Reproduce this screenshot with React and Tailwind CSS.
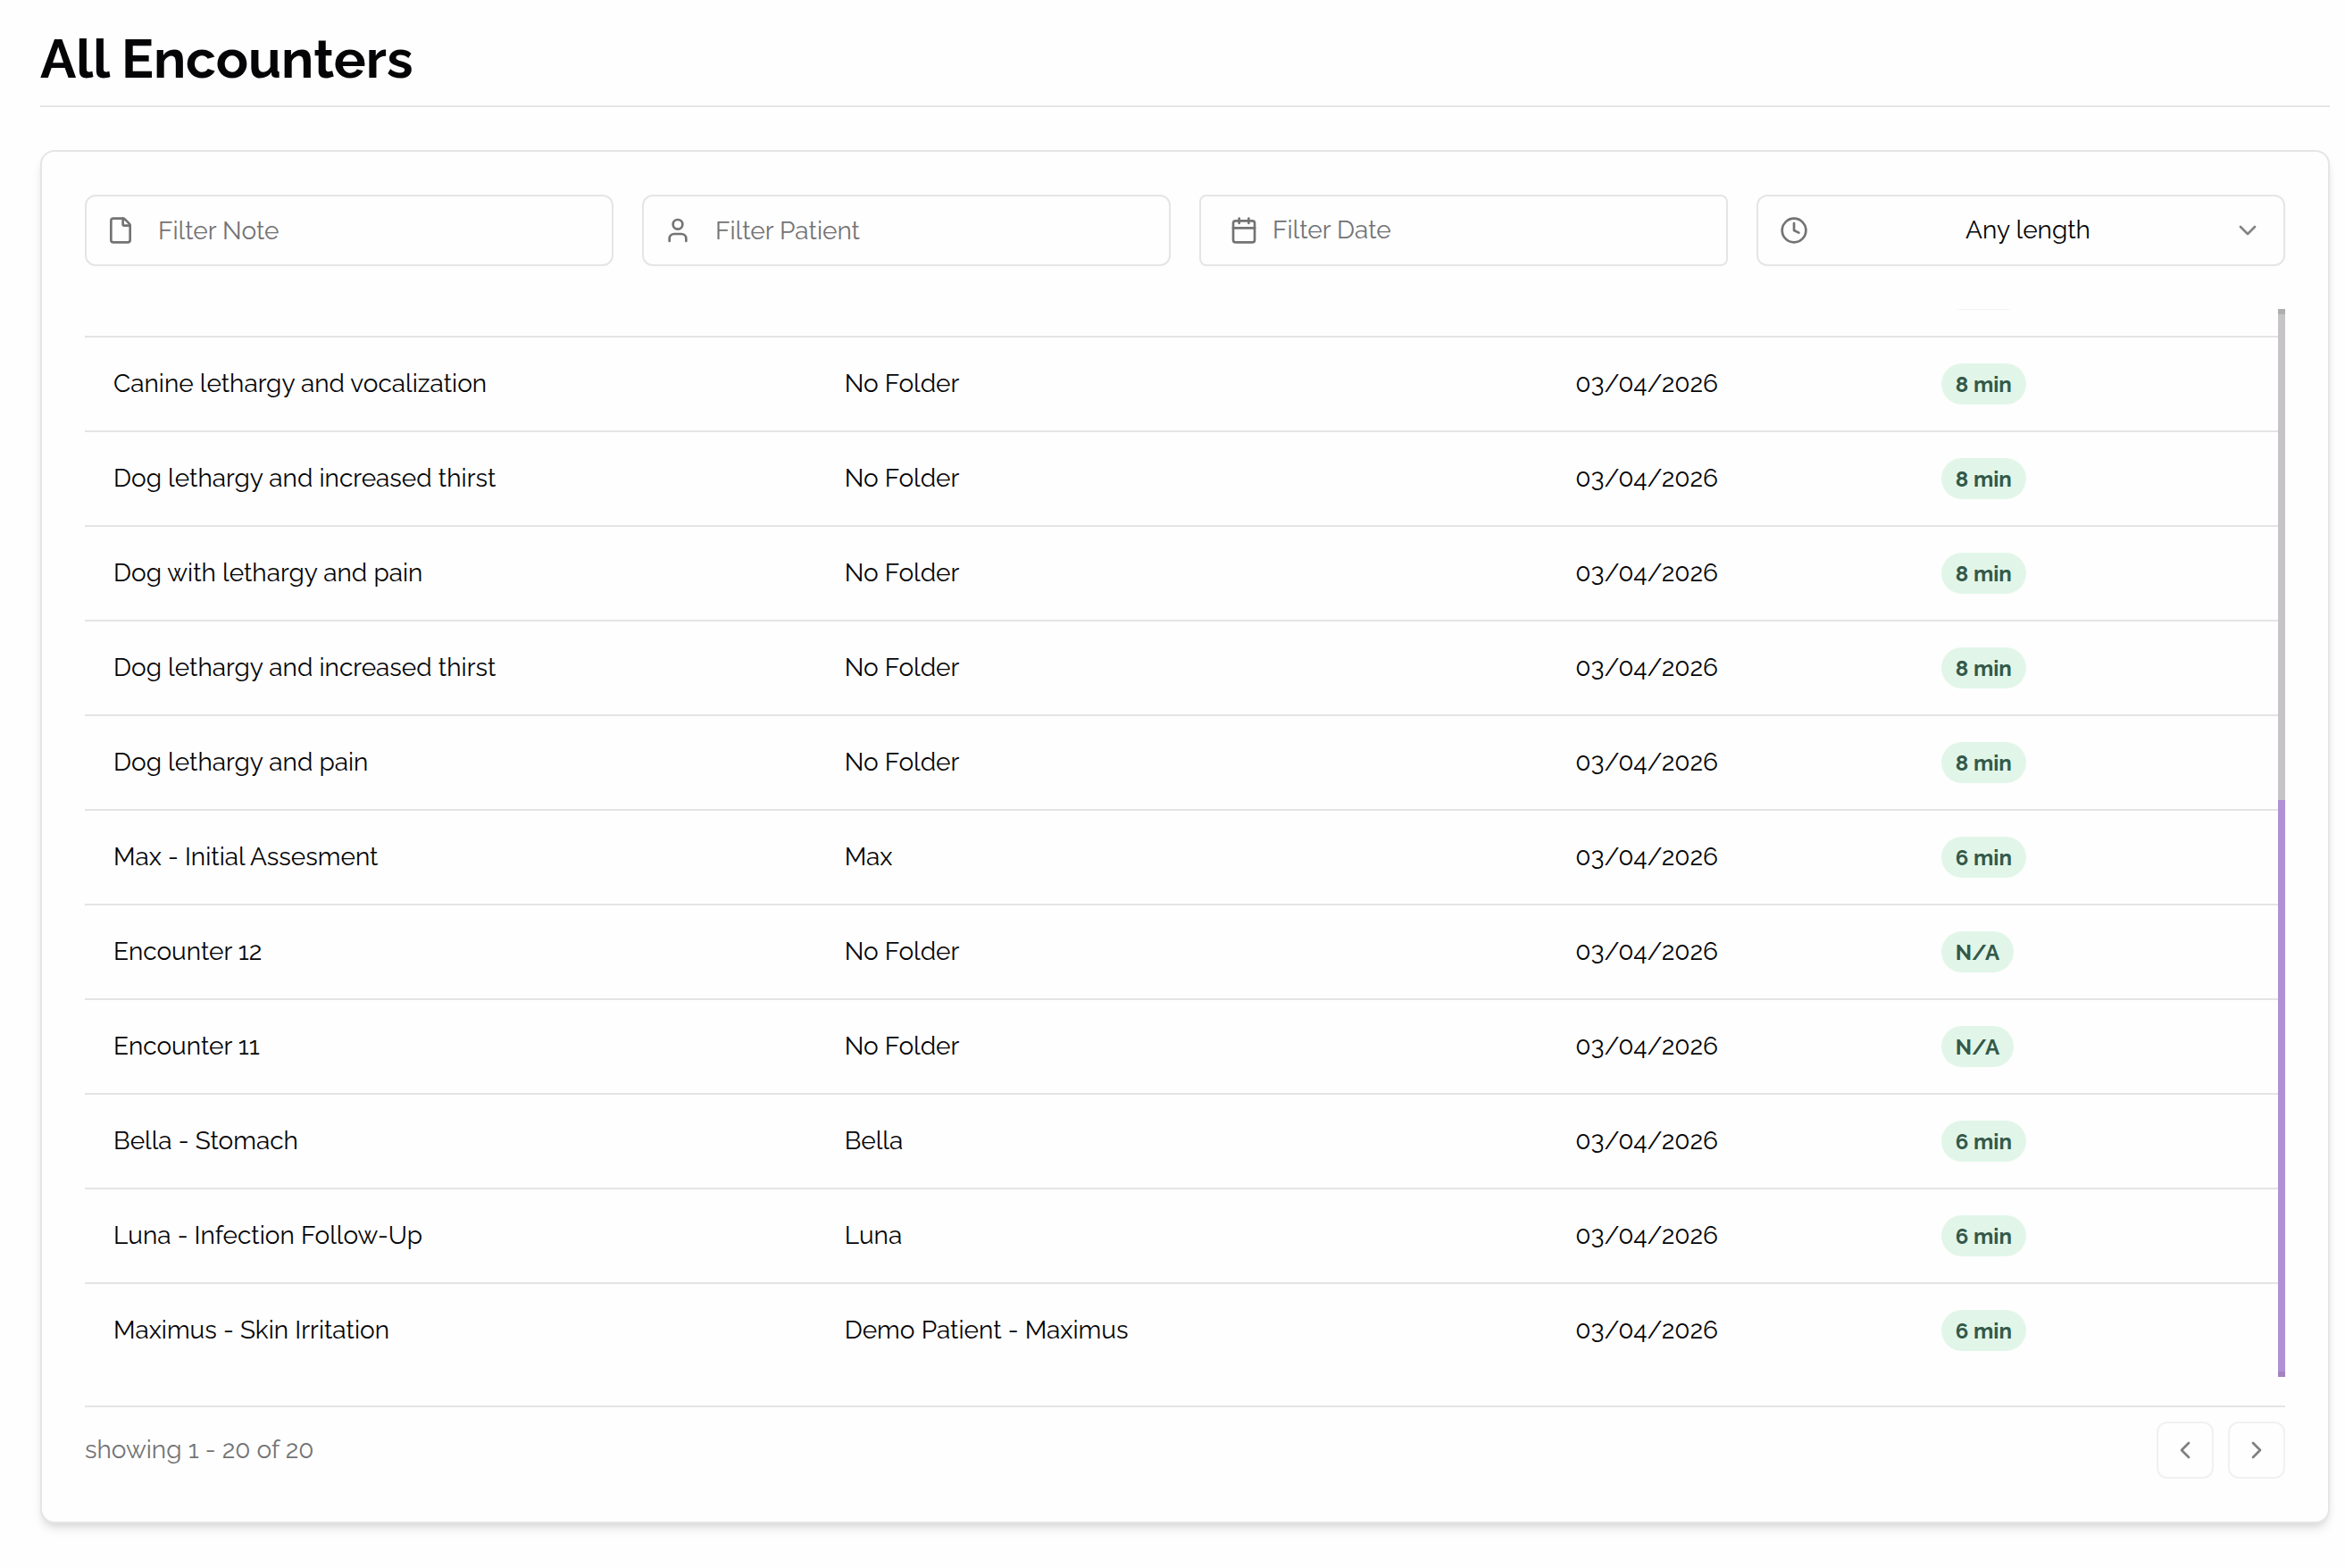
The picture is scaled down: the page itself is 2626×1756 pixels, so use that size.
import { Calendar, ChevronDown, ChevronLeft, ChevronRight, Clock, File, User } from "lucide-react";

const encounters = [
  { note: "Canine lethargy and vocalization", patient: "No Folder", date: "03/04/2026", length: "8 min" },
  { note: "Dog lethargy and increased thirst", patient: "No Folder", date: "03/04/2026", length: "8 min" },
  { note: "Dog with lethargy and pain", patient: "No Folder", date: "03/04/2026", length: "8 min" },
  { note: "Dog lethargy and increased thirst", patient: "No Folder", date: "03/04/2026", length: "8 min" },
  { note: "Dog lethargy and pain", patient: "No Folder", date: "03/04/2026", length: "8 min" },
  { note: "Max - Initial Assesment", patient: "Max", date: "03/04/2026", length: "6 min" },
  { note: "Encounter 12", patient: "No Folder", date: "03/04/2026", length: "N/A" },
  { note: "Encounter 11", patient: "No Folder", date: "03/04/2026", length: "N/A" },
  { note: "Bella - Stomach", patient: "Bella", date: "03/04/2026", length: "6 min" },
  { note: "Luna - Infection Follow-Up", patient: "Luna", date: "03/04/2026", length: "6 min" },
  { note: "Maximus - Skin Irritation", patient: "Demo Patient - Maximus", date: "03/04/2026", length: "6 min" },
];

function TextFilter({ id, icon: Icon, label }) {
  return (
    <div className="flex h-20 items-center gap-[26px] rounded-xl border-2 border-[#e5e5e7] px-[22px]">
      <label htmlFor={id} aria-label={label}>
        <Icon className="size-8 text-[#737375]" />
      </label>
      <input
        id={id}
        type="text"
        placeholder={label}
        className="min-w-0 flex-1 bg-transparent pt-0.5 outline-none placeholder:text-[#737375] placeholder:opacity-100"
      />
    </div>
  );
}

function EncounterRow({ note, patient, date, length }) {
  return (
    <tr className="group">
      <td className="h-[106px] border-b-2 border-[#e4e4e4] px-8 group-last:h-[104px] group-last:border-b-0">{note}</td>
      <td className="border-b-2 border-[#e4e4e4] px-8 group-last:border-b-0">{patient}</td>
      <td className="border-b-2 border-[#e4e4e4] px-8 group-last:border-b-0">{date}</td>
      <td className="border-b-2 border-[#e4e4e4] px-8 group-last:border-b-0">
        <span className="flex h-[46px] w-fit items-center rounded-full bg-[#e1f6e8] px-4 pt-0.5 text-2xl font-bold text-[#34594a]">
          {length}
        </span>
      </td>
    </tr>
  );
}

export default function App() {
  return (
    <main className="min-h-screen bg-[#fefefe] pr-[17px] pb-12 pl-[45px] font-[Raleway,Lato,sans-serif] text-[28px] leading-9 text-[#050507]">
      <header className="border-b-2 border-[#e5e5e5] pt-[30px] pb-4">
        <h1 className="text-6xl leading-[72px] font-bold">All Encounters</h1>
      </header>

      <section className="mt-12 rounded-2xl border-2 border-[#e5e5e7] bg-[#fefefe] p-12 shadow-[0_8px_12px_-2px_rgba(0,0,0,0.1),0_4px_8px_-4px_rgba(0,0,0,0.1)]">
        <form className="grid grid-cols-4 gap-8">
          <TextFilter id="filter-note" icon={File} label="Filter Note" />
          <TextFilter id="filter-patient" icon={User} label="Filter Patient" />
          <button
            type="button"
            className="flex h-20 items-center gap-4 rounded-lg border-2 border-[#e5e5e7] px-8 text-[#737375]"
          >
            <Calendar className="size-8 text-[#737375]" />
            <span>Filter Date</span>
          </button>
          <div className="flex h-20 items-center rounded-xl border-2 border-[#e5e5e7] px-6">
            <label htmlFor="filter-length" aria-label="Length">
              <Clock className="size-8 text-[#737375]" />
            </label>
            <select
              id="filter-length"
              className="min-w-0 flex-1 appearance-none bg-transparent pl-4 text-center outline-none [text-align-last:center]"
            >
              <option>Any length</option>
            </select>
            <ChevronDown className="size-8 text-[#858587]" />
          </div>
        </form>

        <div className="mt-12 flex h-[1196px]">
          <div className="flex min-w-0 flex-1 flex-col justify-end overflow-hidden">
            <table className="w-full table-fixed border-separate border-spacing-0 text-left">
              <colgroup>
                <col className="w-1/3" />
                <col className="w-1/3" />
                <col className="w-1/6" />
                <col className="w-1/6" />
              </colgroup>
              <tbody>
                <tr aria-hidden="true">
                  <td colSpan={3} className="h-[106px] border-b-2 border-[#e4e4e4]" />
                  <td className="border-b-2 border-[#e4e4e4] px-8">
                    <span className="block h-[46px] w-[95px] rounded-full bg-[#f0f2f0]" />
                  </td>
                </tr>
                {encounters.map((encounter, index) => (
                  <EncounterRow key={index} {...encounter} />
                ))}
              </tbody>
            </table>
          </div>
          <div className="flex w-2 flex-col">
            <div className="h-[46%] border-t-[6px] border-[#afafaf] bg-[#c6c4c7]" />
            <div className="flex-1 border-b-[6px] border-[#a583bf] bg-[#b091d6]" />
          </div>
        </div>

        <footer className="mt-8 flex items-center justify-between border-t-2 border-[#e4e4e4] pt-4">
          <p className="text-[#737375]">showing 1 - 20 of 20</p>
          <nav className="flex gap-4">
            <button type="button" aria-label="Previous page" className="flex size-16 items-center justify-center rounded-xl border-2 border-[#f1f1f2]">
              <ChevronLeft className="size-8 text-[#808082]" />
            </button>
            <button type="button" aria-label="Next page" className="flex size-16 items-center justify-center rounded-xl border-2 border-[#f1f1f2]">
              <ChevronRight className="size-8 text-[#808082]" />
            </button>
          </nav>
        </footer>
      </section>
    </main>
  );
}
